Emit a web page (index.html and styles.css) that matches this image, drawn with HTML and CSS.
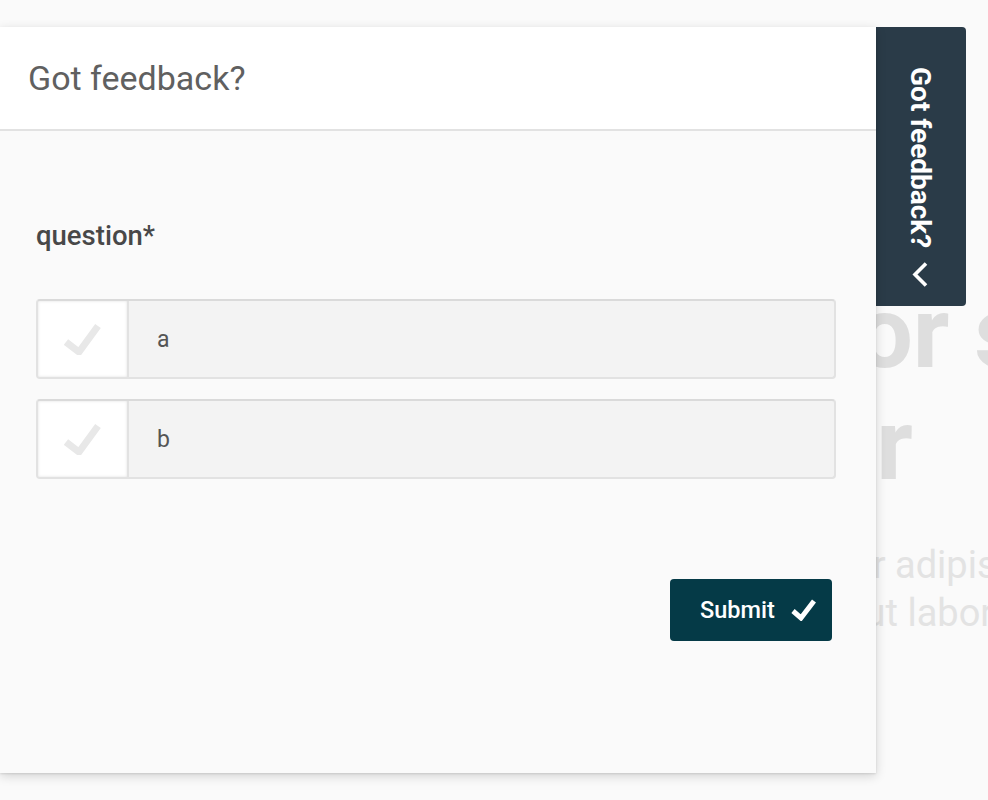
FILE: index.html
```html
<!DOCTYPE html>
<html lang="en">
<head>
<meta charset="utf-8">
<title>Got feedback?</title>
<link rel="stylesheet" href="styles.css">
</head>
<body>
<main class="page">
  <div class="hero">
    <div class="line hero-l1"><span>Lorem ipsum dolor sit</span></div>
    <div class="line hero-l2"><span>amet, consectetur</span></div>
  </div>
  <div class="lead">
    <div class="line lead-l1"><span>Lorem ipsum dolor sit amet, consectetur adipiscing</span></div>
    <div class="line lead-l2"><span>sed do eiusmod tempor incididunt ut labore</span></div>
  </div>
</main>

<aside class="drawer">
  <section class="panel">
    <header class="panel-header">
      <h2 class="panel-title">Got feedback?</h2>
    </header>
    <form class="panel-body">
      <p class="question">question*</p>
      <div class="options">
        <label class="option">
          <span class="check">
            <svg width="38" height="32" viewBox="0 0 38 32"><polyline points="2,19 15,29 34,3" fill="none" stroke="#e8e8e8" stroke-width="7"/></svg>
          </span>
          <span class="option-label">a</span>
        </label>
        <label class="option">
          <span class="check">
            <svg width="38" height="32" viewBox="0 0 38 32"><polyline points="2,19 15,29 34,3" fill="none" stroke="#e8e8e8" stroke-width="7"/></svg>
          </span>
          <span class="option-label">b</span>
        </label>
      </div>
      <div class="actions">
        <button type="button" class="submit">Submit
          <svg width="26" height="22" viewBox="0 0 26 22"><polyline points="2,12 10,19 23,2" fill="none" stroke="#ffffff" stroke-width="5"/></svg>
        </button>
      </div>
    </form>
  </section>
  <button type="button" class="tab">
    <span class="tab-text">Got feedback?</span>
    <svg class="tab-chevron" width="18" height="27" viewBox="0 0 18 27"><polyline points="15,2.5 4,13.5 15,24.5" fill="none" stroke="#ffffff" stroke-width="3.6"/></svg>
  </button>
</aside>
</body>
</html>
```
FILE: styles.css
```css
html, body {
  margin: 0;
  padding: 0;
}
body {
  background: #fafafa;
  font-family: Roboto, "Liberation Sans", sans-serif;
  width: 988px;
  height: 800px;
  overflow: hidden;
  position: relative;
}

.page {
  padding-top: 277px;
}
.line {
  display: flex;
  justify-content: flex-end;
  white-space: nowrap;
}
.hero {
  font-size: 100px;
  font-weight: 700;
  line-height: 112px;
  color: #dedede;
}
.hero-l1 { width: 1086px; }
.hero-l2 { width: 913px; }
.lead {
  margin-top: 40px;
  font-size: 38px;
  line-height: 48px;
  color: #e3e3e3;
}
.lead-l1 { width: 1068px; }
.lead-l2 { width: 1013px; }

.drawer {
  position: absolute;
  top: 27px;
  left: 0;
  display: flex;
  align-items: flex-start;
}
.panel {
  width: 876px;
  height: 746px;
  background: #fafafa;
  box-shadow: 0 3px 10px rgba(0, 0, 0, 0.16), 0 1px 2px rgba(0, 0, 0, 0.1);
  display: flex;
  flex-direction: column;
  position: relative;
  z-index: 1;
}
.panel-header {
  height: 102px;
  background: #ffffff;
  border-bottom: 2px solid #e2e2e2;
  display: flex;
  align-items: center;
  padding-left: 28px;
}
.panel-title {
  margin: 0;
  font-size: 34px;
  font-weight: 400;
  color: #606060;
}
.panel-body {
  padding: 88px 40px 0 36px;
  margin: 0;
}
.question {
  margin: 0;
  font-size: 27.5px;
  line-height: 33px;
  font-weight: 500;
  color: #484848;
}
.options {
  margin-top: 47px;
  display: flex;
  flex-direction: column;
  gap: 20px;
}
.option {
  display: flex;
  align-items: stretch;
  height: 80px;
  box-sizing: border-box;
  border: 2px solid #e2e2e2;
  border-top-color: #dadada;
  border-radius: 4px;
  background: #f3f3f3;
  overflow: hidden;
}
.check {
  width: 89px;
  background: #ffffff;
  border-right: 2px solid #e2e2e2;
  display: flex;
  align-items: center;
  justify-content: center;
  box-shadow: inset 0 0 3px rgba(0, 0, 0, 0.12);
}
.option-label {
  display: flex;
  align-items: center;
  padding-left: 28px;
  font-size: 23px;
  color: #555555;
}
.actions {
  display: flex;
  justify-content: flex-end;
  margin-top: 100px;
  padding-right: 4px;
}
.submit {
  width: 162px;
  height: 62px;
  border: none;
  border-radius: 4px;
  background: #053a47;
  color: #ffffff;
  font-family: Roboto, "Liberation Sans", sans-serif;
  font-size: 23.5px;
  font-weight: 500;
  display: flex;
  align-items: center;
  justify-content: flex-start;
  gap: 16px;
  padding: 0 0 0 30px;
}
.tab {
  margin-left: -2px;
  width: 92px;
  height: 279px;
  background: #2a3b48;
  border: none;
  border-radius: 0 4px 4px 0;
  display: flex;
  flex-direction: column;
  align-items: center;
  padding: 40px 0 0 0;
  gap: 13px;
  color: #ffffff;
  font-family: Roboto, "Liberation Sans", sans-serif;
}
.tab-text {
  writing-mode: vertical-rl;
  font-size: 28px;
  font-weight: 700;
  line-height: 30px;
}
.tab-chevron {
  display: block;
}
```
